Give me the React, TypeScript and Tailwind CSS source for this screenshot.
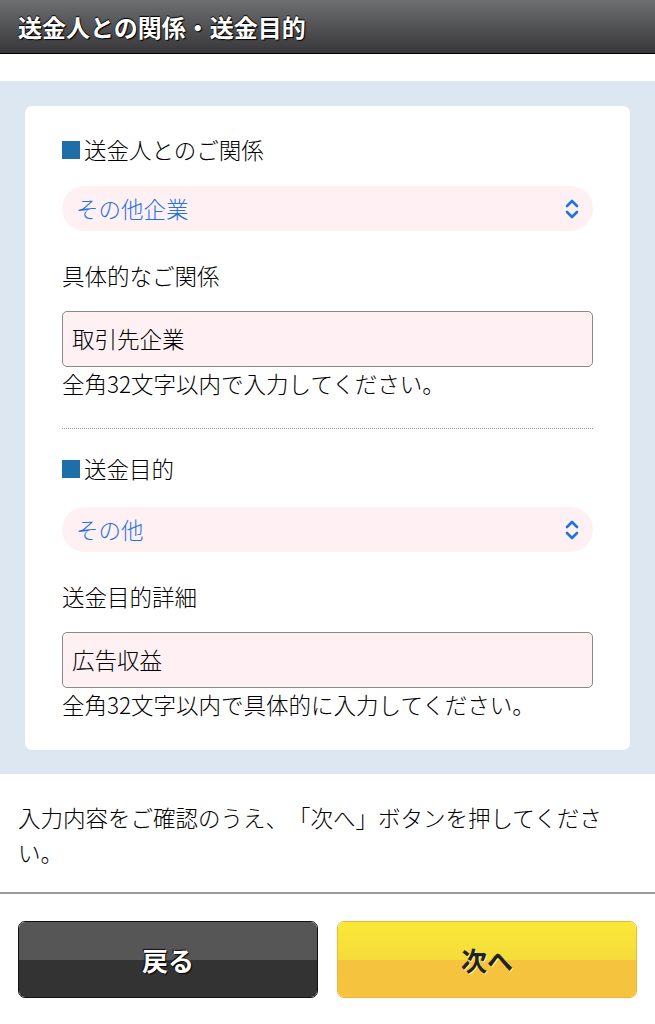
import React from "react";

const font = { fontFamily: '"Noto Sans CJK JP", "Noto Sans", sans-serif' };

function Chevron() {
  return (
    <svg width="16" height="22" viewBox="0 0 16 22" fill="none" stroke="#1f74e0" strokeWidth="2.6" strokeLinecap="round" strokeLinejoin="round">
      <path d="M3 8 L8 3 L13 8" />
      <path d="M3 14 L8 19 L13 14" />
    </svg>
  );
}

function Heading({ children }: { children: React.ReactNode }) {
  return (
    <div className="flex items-center h-[34px] text-[22.5px] text-black font-light">
      <span className="inline-block w-[18px] h-[18px] bg-[#1e6ea8] mr-[4px]" />
      <span>{children}</span>
    </div>
  );
}

function Select({ value }: { value: string }) {
  return (
    <div className="flex items-center justify-between h-[45px] rounded-full bg-[#fff0f3] pl-[14px] pr-[13px]">
      <span className="text-[22.5px] text-[#1f74e0] font-light">{value}</span>
      <Chevron />
    </div>
  );
}

function Input({ value }: { value: string }) {
  return (
    <div className="flex items-center h-[56px] rounded-[5px] border-[1.5px] border-[#8a8a8a] bg-[#fff1f3] pl-[9px] text-[22.5px] text-black font-light">
      {value}
    </div>
  );
}

function Label({ children }: { children: React.ReactNode }) {
  return <div className="h-[34px] flex items-center text-[22.5px] text-black font-light">{children}</div>;
}

export default function App() {
  return (
    <div className="w-[655px] min-h-[1024px] bg-white [text-spacing-trim:space-all]" style={font}>
      <div className="h-[54px] bg-gradient-to-b from-[#6e6f71] to-[#38383a] border-b border-black flex items-center pl-[18px]">
        <span className="text-white font-bold text-[24px] [text-shadow:0_-1px_1px_#000,1px_1px_1px_#000]">
          送金人との関係・送金目的
        </span>
      </div>
      <div className="h-[27px]" />
      <div className="bg-[#dce7f1] px-[25px] pt-[25px] pb-[24px]">
        <div className="bg-white rounded-[7px] px-[37px] pt-[27px] pb-[28px]">
          <Heading>送金人とのご関係</Heading>
          <div className="mt-[19px]">
            <Select value="その他企業" />
          </div>
          <div className="mt-[28px]">
            <Label>具体的なご関係</Label>
          </div>
          <div className="mt-[18px]">
            <Input value="取引先企業" />
          </div>
          <Label>全角32文字以内で入力してください。</Label>
          <div className="mt-[27px] border-t-[1.5px] border-dotted border-[#999]" />
          <div className="mt-[23px]">
            <Heading>送金目的</Heading>
          </div>
          <div className="mt-[21px]">
            <Select value="その他" />
          </div>
          <div className="mt-[28px]">
            <Label>送金目的詳細</Label>
          </div>
          <div className="mt-[18px]">
            <Input value="広告収益" />
          </div>
          <Label>全角32文字以内で具体的に入力してください。</Label>
        </div>
      </div>
      <div className="px-[18px] pt-[26px] pb-[22px] text-[22.5px] leading-[35px] text-black font-light">
        入力内容をご確認のうえ、「次へ」ボタンを押してください。
      </div>
      <div className="h-[2px] bg-[#9a9a9a]" />
      <div className="flex gap-[19px] px-[18px] pt-[27px] pb-[26px]">
        <div className="relative flex-1 h-[77px] rounded-[7px] border-[1.5px] border-[#111] overflow-hidden flex flex-col">
          <div className="flex-1 bg-[#565656]" />
          <div className="flex-1 bg-[#333333]" />
          <div className="absolute inset-0 flex items-center justify-center text-white font-bold text-[26px] [text-shadow:1px_1px_1px_#000,-1px_-1px_1px_#111]">
            戻る
          </div>
        </div>
        <div className="relative flex-1 h-[77px] rounded-[7px] border-[1.5px] border-[#f2b23c] overflow-hidden flex flex-col">
          <div className="flex-1 bg-gradient-to-b from-[#f9e838] to-[#f5dc3a]" />
          <div className="flex-1 bg-[#f6c33f]" />
          <div className="absolute inset-0 flex items-center justify-center text-[#222] font-bold text-[26px] [text-shadow:1px_1px_0_#fff6a0]">
            次へ
          </div>
        </div>
      </div>
    </div>
  );
}
